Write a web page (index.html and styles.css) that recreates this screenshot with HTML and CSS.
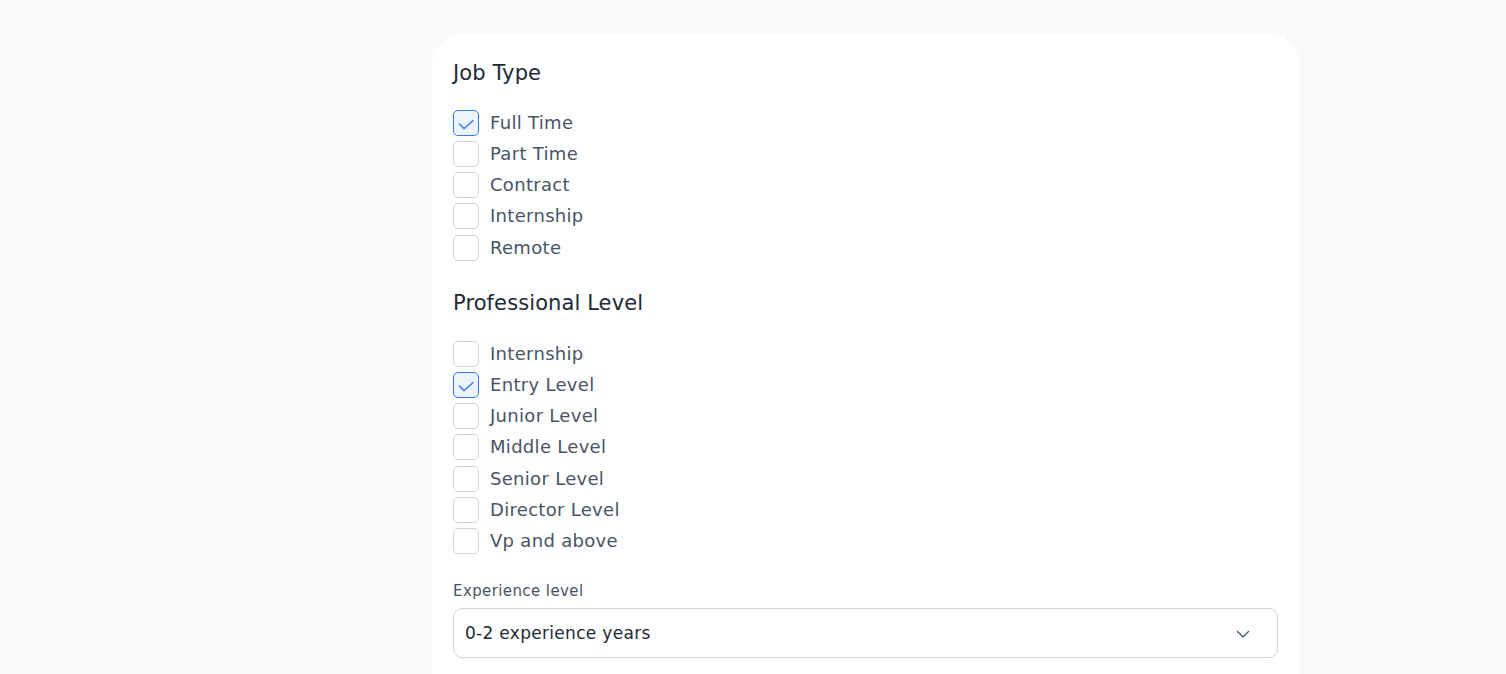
FILE: index.html
```html
<!DOCTYPE html>
<html>
<head>
<meta charset="utf-8">
<link rel="stylesheet" href="styles.css">
</head>
<body>
<div class="page">
  <div class="card">
    <h2 class="section-title">Job Type</h2>
    <ul class="checks">
      <li class="check-row"><span class="box checked"><svg viewBox="0 0 26 26" width="26" height="26"><path d="M6.5 14l4.5 4.8L20 10.5" fill="none" stroke="#2e7cf6" stroke-width="1.4" stroke-linecap="round" stroke-linejoin="round"/></svg></span><span class="label">Full Time</span></li>
      <li class="check-row"><span class="box"></span><span class="label">Part Time</span></li>
      <li class="check-row"><span class="box"></span><span class="label">Contract</span></li>
      <li class="check-row"><span class="box"></span><span class="label">Internship</span></li>
      <li class="check-row"><span class="box"></span><span class="label">Remote</span></li>
    </ul>
    <h2 class="section-title second">Professional Level</h2>
    <ul class="checks second">
      <li class="check-row"><span class="box"></span><span class="label">Internship</span></li>
      <li class="check-row"><span class="box checked"><svg viewBox="0 0 26 26" width="26" height="26"><path d="M6.5 14l4.5 4.8L20 10.5" fill="none" stroke="#2e7cf6" stroke-width="1.4" stroke-linecap="round" stroke-linejoin="round"/></svg></span><span class="label">Entry Level</span></li>
      <li class="check-row"><span class="box"></span><span class="label">Junior Level</span></li>
      <li class="check-row"><span class="box"></span><span class="label">Middle Level</span></li>
      <li class="check-row"><span class="box"></span><span class="label">Senior Level</span></li>
      <li class="check-row"><span class="box"></span><span class="label">Director Level</span></li>
      <li class="check-row"><span class="box"></span><span class="label">Vp and above</span></li>
    </ul>
    <div class="field">
      <div class="field-label">Experience level</div>
      <div class="select">
        <span class="select-value">0-2 experience years</span>
        <svg class="chevron" viewBox="0 0 16 16" width="16" height="16"><path d="M2.5 5.5L8 11l5.5-5.5" fill="none" stroke="#475467" stroke-width="1.3" stroke-linecap="round" stroke-linejoin="round"/></svg>
      </div>
    </div>
  </div>
</div>
</body>
</html>
```

FILE: styles.css
```css
html, body {
  margin: 0;
  padding: 0;
  background: #f8f9fb;
  font-family: "DejaVu Sans", "Open Sans", sans-serif;
}
.page {
  padding-top: 34px;
  padding-left: 432px;
  width: 868px;
}
.card {
  background: #ffffff;
  border-radius: 32px 32px 0 0;
  padding: 23.5px 22px 40px 21px;
  min-height: 640px;
  box-sizing: border-box;
}
.section-title {
  margin: 0;
  font-size: 21px;
  letter-spacing: 0.1px;
  line-height: 30px;
  font-weight: 400;
  color: #1d2939;
}
.section-title.second {
  margin-top: 27.5px;
}
.checks {
  list-style: none;
  margin: 22px 0 0 0;
  padding: 0;
  display: flex;
  flex-direction: column;
  gap: 5.25px;
}
.checks.second {
  margin-top: 22.5px;
}
.check-row {
  display: flex;
  align-items: center;
  gap: 11px;
  height: 26px;
}
.box {
  width: 26px;
  height: 26px;
  box-sizing: border-box;
  border: 1px solid #d0d5dd;
  border-radius: 5px;
  background: #fff;
  flex: none;
  display: flex;
}
.box svg {
  margin: -1px;
}
.box.checked {
  border-color: #2e7cf6;
  background: #eef4ff;
}
.label {
  font-size: 18px;
  letter-spacing: 0.3px;
  color: #475467;
  line-height: 26px;
}
.field {
  margin-top: 26.5px;
}
.field-label {
  font-size: 15px;
  letter-spacing: 0.4px;
  line-height: 20px;
  color: #475467;
}
.select {
  margin-top: 7px;
  height: 50px;
  box-sizing: border-box;
  border: 1px solid #d0d5dd;
  border-radius: 9px;
  display: flex;
  align-items: center;
  justify-content: space-between;
  padding: 0 26px 0 11px;
}
.select-value {
  font-size: 17px;
  letter-spacing: 0.3px;
  color: #1d2939;
}
.chevron {
  margin-top: 2px;
}
```
